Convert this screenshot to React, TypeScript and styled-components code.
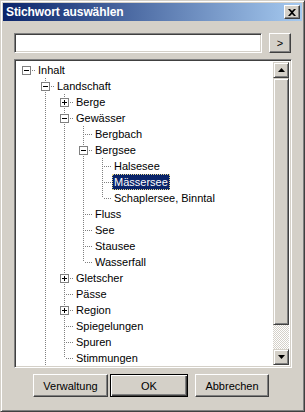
import React from "react";
import styled, { createGlobalStyle, css } from "styled-components";

const GlobalStyle = createGlobalStyle`
  body {
    margin: 0;
    background: #d4d0c8;
    font-family: "Liberation Sans", Arial, sans-serif;
    font-size: 11px;
    color: #000;
  }
`;

const raised = css`
  border: 1px solid;
  border-color: #d4d0c8 #404040 #404040 #d4d0c8;
  box-shadow: inset 1px 1px #fff, inset -1px -1px #808080;
  background: #d4d0c8;
`;

const sunken = css`
  border: 1px solid;
  border-color: #808080 #fff #fff #808080;
  box-shadow: inset 1px 1px #404040, inset -1px -1px #d4d0c8;
  background: #fff;
`;

const Window = styled.div`
  box-sizing: border-box;
  width: 305px;
  height: 412px;
  padding: 2px;
  border: 1px solid;
  border-color: #d4d0c8 #404040 #404040 #d4d0c8;
  box-shadow: inset 1px 1px #fff, inset -1px -1px #808080;
  background: #d4d0c8;
  display: flex;
  flex-direction: column;
`;

const TitleBar = styled.div`
  height: 18px;
  display: flex;
  align-items: center;
  justify-content: space-between;
  padding: 0 2px 0 3px;
  background: linear-gradient(to right, #0a246a, #a6caf0);
`;

const Title = styled.span`
  color: #fff;
  font-weight: bold;
  font-size: 12px;
  letter-spacing: -0.1px;
`;

const CloseButton = styled.div`
  box-sizing: border-box;
  width: 16px;
  height: 14px;
  display: flex;
  align-items: center;
  justify-content: center;
  border: 1px solid;
  border-color: #fff #404040 #404040 #fff;
  box-shadow: inset -1px -1px #808080;
  background: #d4d0c8;
`;

const Body = styled.div`
  display: flex;
  flex-direction: column;
  padding: 12px 10px 0 11px;
`;

const SearchRow = styled.div`
  display: flex;
  gap: 7px;
`;

const SearchInput = styled.div`
  ${sunken};
  box-sizing: border-box;
  width: 248px;
  height: 20px;
`;

const ArrowButton = styled.div`
  box-sizing: border-box;
  width: 22px;
  height: 20px;
  display: flex;
  align-items: center;
  justify-content: center;
  border: 1px solid;
  border-color: #fff #404040 #404040 #fff;
  box-shadow: inset -1px -1px #808080;
  padding-bottom: 1px;
`;

const TreeBox = styled.div`
  ${sunken};
  box-sizing: border-box;
  margin-top: 6px;
  width: 278px;
  height: 309px;
  padding: 2px;
  display: flex;
`;

const TreeList = styled.div`
  flex: 1;
  overflow: hidden;
`;

const Row = styled.div`
  display: flex;
  height: 16px;
`;

const Guide = styled.div<{ $line: boolean }>`
  flex: none;
  width: 19px;
  ${(p) =>
    p.$line &&
    css`
      background-image: linear-gradient(#808080 50%, transparent 50%);
      background-size: 1px 2px;
      background-repeat: repeat-y;
      background-position: 9px 0;
    `}
`;

const Joint = styled.div<{ $first: boolean; $last: boolean }>`
  flex: none;
  width: 19px;
  position: relative;
  &::before {
    content: "";
    position: absolute;
    left: 9px;
    width: 1px;
    top: ${(p) => (p.$first ? 8 : 0)}px;
    bottom: ${(p) => (p.$last ? 8 : 0)}px;
    background: linear-gradient(#808080 50%, transparent 50%) 0 0 / 1px 2px;
  }
  &::after {
    content: "";
    position: absolute;
    left: 11px;
    top: 8px;
    width: 8px;
    height: 1px;
    background: linear-gradient(to right, #808080 50%, transparent 50%) 0 0 / 2px 1px;
  }
`;

const Expander = styled.svg`
  position: absolute;
  left: 5px;
  top: 4px;
  z-index: 1;
`;

const Label = styled.span<{ $selected?: boolean }>`
  padding: 0 2px;
  line-height: 16px;
  white-space: nowrap;
  ${(p) =>
    p.$selected &&
    css`
      background: #0a246a;
      color: #fff;
      outline: 1px dotted #e8d890;
      outline-offset: -1px;
    `}
`;

const ScrollBar = styled.div`
  width: 16px;
  display: flex;
  flex-direction: column;
`;

const ScrollButton = styled.div`
  ${raised};
  box-sizing: border-box;
  height: 16px;
  display: flex;
  align-items: center;
  justify-content: center;
`;

const Thumb = styled.div`
  ${raised};
  box-sizing: border-box;
  height: 247px;
`;

const Track = styled.div`
  flex: 1;
  background: repeating-conic-gradient(#fff 0 25%, #d4d0c8 0 50%) 0 0 / 2px 2px;
`;

const ButtonRow = styled.div`
  display: flex;
  margin-top: 6px;
  padding-left: 19px;
`;

const Button = styled.div<{ $default?: boolean; $width: number; $gap?: number }>`
  box-sizing: border-box;
  width: ${(p) => p.$width}px;
  height: 23px;
  margin-left: ${(p) => p.$gap ?? 0}px;
  display: flex;
  align-items: center;
  justify-content: center;
  font-size: 11px;
  ${(p) =>
    p.$default
      ? css`
          border: 1px solid #000;
          box-shadow: inset 1px 1px #fff, inset -1px -1px #404040,
            inset -2px -2px #808080;
        `
      : css`
          border: 1px solid;
          border-color: #fff #404040 #404040 #fff;
          box-shadow: inset -1px -1px #808080;
        `}
`;

type Node = { label: string; open?: boolean; collapsed?: boolean; selected?: boolean; children?: Node[] };

const tree: Node[] = [
  {
    label: "Inhalt",
    open: true,
    children: [
      {
        label: "Landschaft",
        open: true,
        children: [
          { label: "Berge", collapsed: true },
          {
            label: "Gewässer",
            open: true,
            children: [
              { label: "Bergbach" },
              {
                label: "Bergsee",
                open: true,
                children: [
                  { label: "Halsesee" },
                  { label: "Mässersee", selected: true },
                  { label: "Schaplersee, Binntal" },
                ],
              },
              { label: "Fluss" },
              { label: "See" },
              { label: "Stausee" },
              { label: "Wasserfall" },
            ],
          },
          { label: "Gletscher", collapsed: true },
          { label: "Pässe" },
          { label: "Region", collapsed: true },
          { label: "Spiegelungen" },
          { label: "Spuren" },
          { label: "Stimmungen" },
        ],
      },
      { label: "Menschen", collapsed: true },
    ],
  },
];

type Flat = { node: Node; guides: boolean[]; first: boolean; last: boolean };

const flatten = (nodes: Node[], guides: boolean[], root: boolean, out: Flat[]) => {
  nodes.forEach((node, i) => {
    const last = i === nodes.length - 1;
    out.push({ node, guides, first: root && i === 0, last });
    if (node.open && node.children) flatten(node.children, [...guides, !last], false, out);
  });
  return out;
};

// only the first 19 rows fit in the visible part of the tree
const rows = flatten(tree, [], true, []).slice(0, 19);

const ExpandBox = ({ plus }: { plus: boolean }) => (
  <Expander width="9" height="9" viewBox="0 0 9 9">
    <rect x="0.5" y="0.5" width="8" height="8" fill="#fff" stroke="#808080" />
    <path d="M2 4.5h5" stroke="#000" />
    {plus && <path d="M4.5 2v5" stroke="#000" />}
  </Expander>
);

const Arrow = ({ up }: { up: boolean }) => (
  <svg width="7" height="4" viewBox="0 0 7 4">
    <path d={up ? "M3.5 0L7 4H0z" : "M0 0h7L3.5 4z"} fill="#000" />
  </svg>
);

export default function App() {
  return (
    <>
      <GlobalStyle />
      <Window>
        <TitleBar>
          <Title>Stichwort auswählen</Title>
          <CloseButton>
            <svg width="8" height="7" viewBox="0 0 8 7">
              <path d="M0 0h2l2 2 2-2h2L5 3.5 8 7H6L4 5 2 7H0l3-3.5z" fill="#000" />
            </svg>
          </CloseButton>
        </TitleBar>
        <Body>
          <SearchRow>
            <SearchInput />
            <ArrowButton>&gt;</ArrowButton>
          </SearchRow>
          <TreeBox>
            <TreeList>
              {rows.map(({ node, guides, first, last }, i) => (
                <Row key={i}>
                  {guides.map((g, j) => (
                    <Guide key={j} $line={g} />
                  ))}
                  <Joint $first={first} $last={last}>
                    {node.children || node.collapsed ? <ExpandBox plus={!node.open} /> : null}
                  </Joint>
                  <Label $selected={node.selected}>{node.label}</Label>
                </Row>
              ))}
            </TreeList>
            <ScrollBar>
              <ScrollButton>
                <Arrow up />
              </ScrollButton>
              <Thumb />
              <Track />
              <ScrollButton>
                <Arrow up={false} />
              </ScrollButton>
            </ScrollBar>
          </TreeBox>
          <ButtonRow>
            <Button $width={75}>Verwaltung</Button>
            <Button $width={78} $gap={2} $default>
              OK
            </Button>
            <Button $width={74} $gap={7}>
              Abbrechen
            </Button>
          </ButtonRow>
        </Body>
      </Window>
    </>
  );
}
